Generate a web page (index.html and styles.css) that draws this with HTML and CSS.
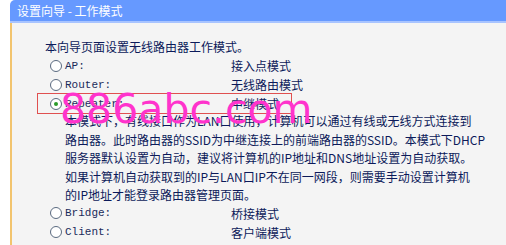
FILE: index.html
```html
<!DOCTYPE html>
<html lang="zh-CN">
<head>
<meta charset="utf-8">
<title>设置向导 - 工作模式</title>
<link rel="stylesheet" href="styles.css">
</head>
<body>
<div class="panel">
  <div class="header">设置向导 - 工作模式</div>
  <div class="content">
    <div class="intro">本向导页面设置无线路由器工作模式。</div>
    <div class="row"><span class="radio"></span><span class="label">AP:</span><span class="mode">接入点模式</span></div>
    <div class="row"><span class="radio"></span><span class="label">Router:</span><span class="mode">无线路由模式</span></div>
    <div class="row selected"><span class="radio checked"></span><span class="label">Repeater:</span><span class="mode">中继模式</span></div>
    <div class="desc">
      <div>本模式下，有线接口作为LAN口使用，计算机可以通过有线或无线方式连接到</div>
      <div>路由器。此时路由器的SSID为中继连接上的前端路由器的SSID。本模式下DHCP</div>
      <div>服务器默认设置为自动，建议将计算机的IP地址和DNS地址设置为自动获取。</div>
      <div>如果计算机自动获取到的IP与LAN口IP不在同一网段，则需要手动设置计算机</div>
      <div>的IP地址才能登录路由器管理页面。</div>
    </div>
    <div class="row"><span class="radio"></span><span class="label">Bridge:</span><span class="mode">桥接模式</span></div>
    <div class="row"><span class="radio"></span><span class="label">Client:</span><span class="mode">客户端模式</span></div>
    <div class="watermark">886abc.com</div>
  </div>
</div>
</body>
</html>
```
FILE: styles.css
```css
html, body {
  margin: 0;
  padding: 0;
  background: #ffffff;
}
body {
  font-family: "Noto Sans CJK SC", "Noto Sans", sans-serif;
  font-size: 12px;
  color: #0c1a5a;
  width: 506px;
  height: 245px;
  overflow: hidden;
}
.panel {
  margin-left: 10px;
  width: 496px;
}
.header {
  height: 21px;
  line-height: 21px;
  background: #6699ff;
  border-top-left-radius: 5px;
  color: #ffffff;
  padding-left: 7px;
  font-size: 12px;
  border-bottom: 2px solid #a8c4ff;
}
.content {
  position: relative;
  background: #f4f4f4;
  border-left: 2px solid #f2c46e;
  height: 222px;
  padding-top: 14px;
  box-sizing: border-box;
}
.intro {
  padding-left: 33px;
  height: 19px;
  line-height: 19px;
}
.row {
  display: flex;
  align-items: center;
  height: 19px;
  padding-left: 38px;
}
.row.selected {
  margin-left: 25px;
  padding-left: 12px;
  width: 241px;
  height: 19px;
  border: 1px solid #e05050;
  margin-top: -1px;
  margin-bottom: -1px;
}
.radio {
  width: 10px;
  height: 10px;
  border: 1px solid #5a6a80;
  border-radius: 50%;
  background: #ffffff;
  box-sizing: content-box;
  position: relative;
  flex: none;
}
.radio.checked::after {
  content: "";
  position: absolute;
  left: 3px;
  top: 3px;
  width: 4px;
  height: 4px;
  border-radius: 50%;
  background: #2a9a2a;
}
.label {
  font-family: "Liberation Mono", monospace;
  font-size: 11px;
  margin-left: 3px;
  width: 166px;
  color: #1a2a5a;
}
.mode {
  color: #0c1a5a;
}
.desc {
  padding-left: 53px;
  line-height: 18.5px;
  margin-top: -2px;
  margin-bottom: -1px;
}
.watermark {
  position: absolute;
  left: 48px;
  top: 66px;
  font-family: "DejaVu Sans", sans-serif;
  font-size: 41px;
  color: #ff33cc;
  line-height: 40px;
  pointer-events: none;
}
```
